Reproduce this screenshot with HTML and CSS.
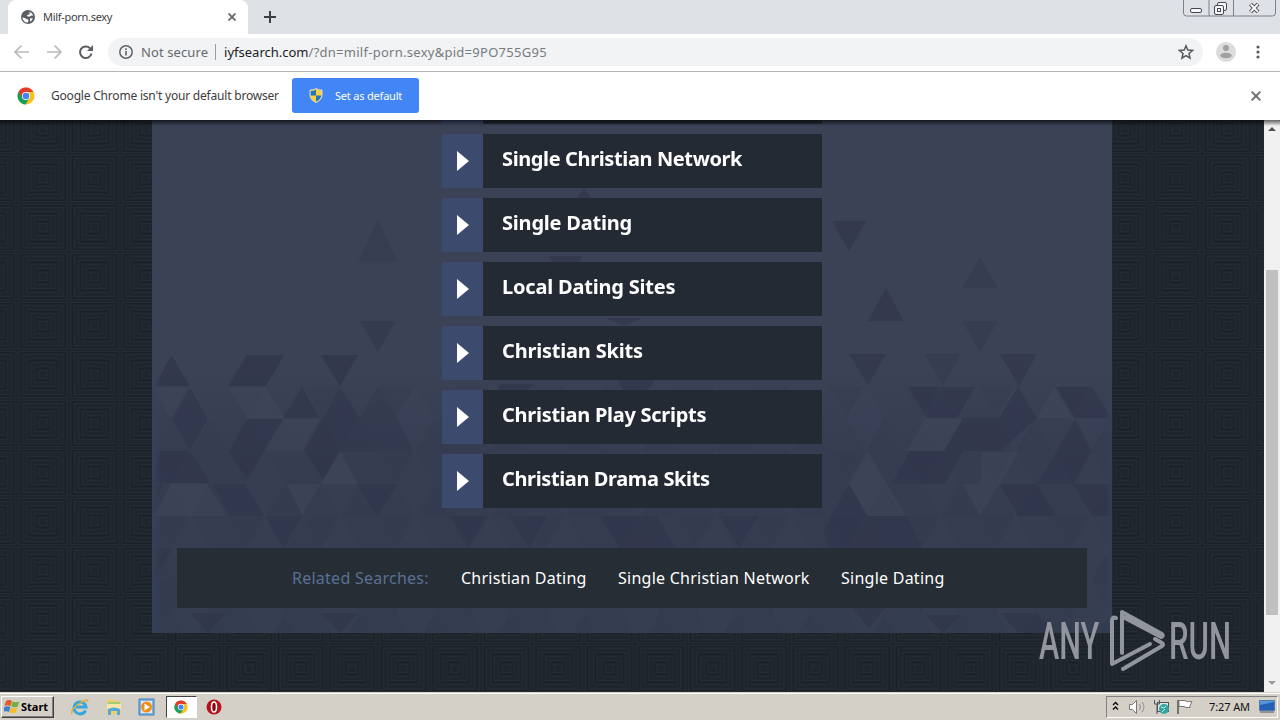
FILE: index.html
```html
<!DOCTYPE html>
<html lang="en">
<head>
<meta charset="utf-8">
<title>Browser</title>
<link rel="stylesheet" href="styles.css">
</head>
<body>
<svg width="0" height="0" class="defs"><defs>
<symbol id="chrome" viewBox="0 0 18 18"><circle cx="9" cy="9" r="8.5" fill="#fbc116"/><path d="M9 9 1.600 4.800A8.500 8.500 0 0 0 8.500 17.500L12.600 11z" fill="#17a05d"/><path d="M1.600 4.800A8.500 8.500 0 0 1 16.400 5H9L5.400 11z" fill="#e33b2e"/><circle cx="9" cy="9" r="4.100" fill="#fff"/><circle cx="9" cy="9" r="3.300" fill="#4285f4"/></symbol>
</defs></svg>
<header class="tabstrip">
  <div class="tab">
    <svg class="globe" width="14" height="14" viewBox="0 0 14 14"><circle cx="7" cy="7" r="7" fill="#5b5f64"/><path d="M1.500 7.500 4 8l1.500 1.200 2 .3-.5 3C4 12.600 1.500 10.500 1.500 7.500zM7.500 1.700 9 3 8 4.500 6 5 6.500 6.500H9l1.500-1 1.800 0C11.500 3.500 10 2 7.500 1.700zM9 8.500l2.800-.5-1 2.500-1.800 1z" fill="#fff"/></svg>
    <span class="tab-title">Milf-porn.sexy</span>
    <svg class="tab-close" width="8" height="8" viewBox="0 0 8 8"><path d="M.5.5l7 7M7.500.5l-7 7" stroke="#5f6368" stroke-width="1.700"/></svg>
  </div>
  <svg class="plus" width="12" height="12" viewBox="0 0 12 12"><path d="M6 0v12M0 6h12" stroke="#3c4043" stroke-width="2"/></svg>
  <svg class="winbtns" width="94" height="18" viewBox="0 0 94 18" fill="none" stroke="#7c818a"><path d="M.5 0v13q0 3 3 3h86q3 0 3-3V0M26 0v16M50.500 0v16"/><g stroke="#45484e"><rect x="7.500" y="8.500" width="11" height="4" rx="1.500" fill="#f7f7f7"/><rect x="34.500" y="2.500" width="9" height="8" rx="1.500" fill="#f7f7f7"/><rect x="31.500" y="5.500" width="9" height="9" rx="1.500" fill="#f7f7f7"/><rect x="34.500" y="8.500" width="3" height="3"/></g><path d="M67.500 4l7.500 8M75 4l-7.500 8" stroke="#45484e" stroke-width="4"/><path d="M67.700 4.200l7.100 7.600M74.800 4.200l-7.100 7.600" stroke="#f7f7f7" stroke-width="2"/></svg>
</header>
<nav class="toolbar">
  <svg class="navicons" width="82" height="18" viewBox="0 0 82 18" fill="none" stroke-width="2"><path d="M16 9H2.500M8.500 2.500 2 9l6.500 6.500M34 9h13.500M41.500 2.500 48 9l-6.500 6.500" stroke="#b8babd" stroke-width="1.700"/><path d="M77 5.200A5.800 5.800 0 1 0 78.500 10.500" stroke="#5a5d61"/><path d="M80 2v6h-6z" fill="#5a5d61"/></svg>
  <div class="omnibox">
    <svg width="14" height="14" viewBox="0 0 14 14"><circle cx="7" cy="7" r="6.200" fill="none" stroke="#5f6368" stroke-width="1.500"/><path d="M7 6v4.500M7 3.300v1.600" stroke="#5f6368" stroke-width="1.600"/></svg>
    <span class="notsecure">Not secure</span><i class="sep"></i><span class="host">iyfsearch.com</span><span class="path">/?dn=milf-porn.sexy&amp;pid=9PO755G95</span>
    <svg class="star" width="16" height="16" viewBox="0 0 16 16"><path d="M8 1.800l1.800 4.300 4.700.4-3.500 3 1 4.600-4-2.400-4 2.400 1-4.600-3.500-3 4.700-.4z" fill="none" stroke="#56595e" stroke-width="1.500"/></svg>
  </div>
  <svg class="avatar" width="20" height="20" viewBox="0 0 20 20"><circle cx="10" cy="10" r="10" fill="#dcdcdc"/><circle cx="10" cy="6" r="3" fill="#a1a1a1"/><ellipse cx="10" cy="13.500" rx="5.700" ry="2.800" fill="#a1a1a1"/></svg>
  <svg class="dots" width="4" height="14" viewBox="0 0 4 14" fill="#5a5d61"><circle cx="2" cy="2" r="1.600"/><circle cx="2" cy="7" r="1.600"/><circle cx="2" cy="12" r="1.600"/></svg>
</nav>
<section class="infobar">
  <svg width="18" height="18"><use href="#chrome"/></svg>
  <span class="info-text">Google Chrome isn't your default browser</span>
  <div class="set-default">
    <svg width="14" height="15" viewBox="0 0 14 15"><path d="M7 .5q3 2 6 1.500v5q0 5-6 7.500-6-2.500-6-7.500V2q3 .5 6-1.500z" fill="#f8d13b" stroke="#d5d7ce"/><path d="M7 1.500v6H1.700V3q3 .2 5.300-1.500zM7 7.500h5.200q-.5 4-5.200 6z" fill="#2473bd"/></svg>
    <span>Set as default</span>
  </div>
  <svg class="info-close" width="10" height="10" viewBox="0 0 10 10"><path d="M.7.7l8.600 8.600M9.300.7.7 9.300" stroke="#6a6a6a" stroke-width="1.900"/></svg>
</section>
<main class="viewport">
  <svg class="texture" width="1264" height="572"><defs><pattern id="weave" x="17.500" y="34" width="51.500" height="49" patternUnits="userSpaceOnUse"><rect width="51.500" height="49" fill="#1f252c"/><g fill="none" stroke="#252b33" stroke-width="1"><rect x="1.500" y="1.500" width="48" height="46"/><rect x="5.500" y="4.500" width="40" height="40"/><rect x="9.500" y="8.500" width="32" height="32"/><rect x="13.500" y="12.500" width="24" height="24"/><rect x="17.500" y="16.500" width="16" height="16"/><rect x="21.500" y="20.500" width="8" height="8"/></g><g fill="none" stroke="#1c2128"><rect x="3.500" y="2.500" width="44" height="44"/><rect x="11.500" y="10.500" width="28" height="28"/><rect x="19.500" y="18.500" width="12" height="12"/></g></pattern></defs><rect width="1264" height="572" fill="url(#weave)"/></svg>
  <div class="panel">
    <svg class="facets" width="960" height="513" viewBox="152 120 960 513">
      <defs><linearGradient id="deep" x1="0" y1="0" x2="0" y2="1"><stop offset="0" stop-color="#353b50" stop-opacity="0"/><stop offset=".35" stop-color="#353b50" stop-opacity=".85"/><stop offset="1" stop-color="#343c50"/></linearGradient>
      <linearGradient id="edge" x1="0" y1="0" x2="1" y2="0"><stop offset="0" stop-color="#344558" stop-opacity=".7"/><stop offset=".01" stop-color="#344558" stop-opacity="0"/><stop offset=".992" stop-color="#344558" stop-opacity="0"/><stop offset="1" stop-color="#344558" stop-opacity=".6"/></linearGradient>
      <pattern id="tri" x="153" y="386" width="75" height="65" patternUnits="userSpaceOnUse"><path d="M0 0h37.500L18.750 32.500zM56.250 32.500 75 65H37.500z" fill="#2e3449" opacity=".15"/><path d="M37.500 0 56.250 32.500H18.750zM18.750 32.500h37.500L37.500 65z" fill="#414860" opacity=".12"/></pattern></defs>
      <path d="M152 368h960v265H152z" fill="url(#deep)"/><path d="M152 386h960v247H152z" fill="url(#tri)"/>
      <g fill="#30364a">
        <path opacity=".3" d="M378 220l20 42h-40z"/><path opacity=".55" d="M360 321h36l-18 31z"/>
        <path opacity=".7" d="M832 221h34l-17 30zM886 288l18 33h-36z"/><path opacity=".4" d="M980 257l18 31h-36zM962 321h36l-18 31zM925 354h36l-18 31z"/><path opacity=".7" d="M849 354h37l-18 31zM1000 354h37l-18 32z"/>
        <path opacity=".75" d="M171.500 355l18 31h-35zM247 355h37l-18 31h-38zM321 355h37l-18 31z"/>
      </g>
      <g fill="#2f354a" opacity=".6">
        <path d="M190 388l18 31-18 31-18-31zM302 387l18 31h-37zM340 387l20 31-37 61-18-29zM247 419h36l-36 60-18-28zM160 451h30l20 32h-57zM212 484h33l19 32h-34zM358 484h39l-20 32zM265 516h37l-19 32z"/>
        <path opacity=".55" d="M378 387l20 31 14 34h-72l20-34z"/>
        <path d="M908 387h67l-18 31h-30zM1056 387h36l19 31h-36zM1018 387l19 31-37 33h-55l18-33h36zM1075 419l-37 65h36l18-33zM999 484h38l19 32h-38zM868 516h38l16 32h-73zM910 451h53l-18 33h-53zM849 484l18 32-18 32h-20l-5-18zM1073 484h39v32h-20z"/>
        <path d="M584 188l10 13h-20zM549 256h34l-17 31zM606 318h36l-18 8zM500 384h35l-10 8h-28zM618 380h37l-9 12h-22zM510 516h37l-18 32zM600 516h56l20 32h-56zM720 516h38l-19 32zM450 516h36l-18 32z"/>
      </g>
      <g fill="#424759" opacity=".5">
        <path d="M153 387h36l-18 31zM228 387h37l19 31h-37zM284 419h36l-18 32h-37zM171 484h36l20 32h-73zM340 452l18 32h-37zM302 484h19l-19 31-15-31z"/>
        <path d="M925 419h38l-19 32h-37zM868 451l19 33 19 32h-38l-19-32zM982 452h36l-18 32h-20zM963 484h37l-20 32zM1055 387l18 31h-37z"/>
      </g>
      <g fill="#303548" opacity=".6"><path d="M162 484h-10v32zM152 548h20l-20 34zM320 613h38l-18 20zM925 615h36l-18 18zM852 608h34l-17 20zM190 613h36l-18 20zM1000 613h37l20 20h-38z"/></g>
      <path d="M152 120h960v513H152z" fill="url(#edge)"/>
    </svg>
    <ul class="links">
      <li><b></b><span></span></li>
      <li><b></b><span class="w1">Single Christian Network</span></li>
      <li><b></b><span class="w2">Single Dating</span></li>
      <li><b></b><span class="w2">Local Dating Sites</span></li>
      <li><b></b><span class="w2">Christian Skits</span></li>
      <li><b></b><span class="w5">Christian Play Scripts</span></li>
      <li><b></b><span class="w1">Christian Drama Skits</span></li>
    </ul>
    <div class="related"><span class="label">Related Searches:</span><span class="r1">Christian Dating</span><span class="r2">Single Christian Network</span><span class="r3">Single Dating</span></div>
  </div>
  <div class="scrollbar"><i class="up"></i><i class="thumb"></i><i class="down"></i></div>
  <div class="watermark">
    <svg width="200" height="70" viewBox="1035 605 200 70"><g fill="none" stroke="#92959d" stroke-width="4" stroke-linejoin="round" stroke-linecap="round"><path d="M1116 618q-4-2-4 3v43l38-20M1122 653v-41l40 22q2 2-1 3l-36-19M1123 669l39-23q2-1 0-3l-7-4"/></g></svg>
    <span class="any">ANY</span><span class="run">RUN</span>
  </div>
</main>
<footer class="taskbar">
  <div class="start"><svg width="16" height="15" viewBox="0 0 16 15"><path d="M2 2q3-2 6 0L6.500 7q-3-1.500-6 0z" fill="#e45b24"/><path d="M8.700 2.500q3 1.500 6.500 0l-1.500 5q-3 1.500-6.500 0z" fill="#73b03b"/><path d="M.4 8q3-1.500 6 0L5 13q-3-1.500-6 0z" fill="#3c7fd0"/><path d="M7 8.500q3 1.500 6.500 0l-1.500 5q-3 1.500-6.500 0z" fill="#f8bd2a"/></svg><span>Start</span></div>
  <div class="launch">
    <svg width="18" height="18" viewBox="0 0 18 18"><path d="M14.500 12.500A6 6 0 1 1 15 9H5" fill="none" stroke="#38a7df" stroke-width="3"/><path d="M1 16Q-1 12 8 6 18-1 16.500 4" fill="none" stroke="#e4ad2d" stroke-width="1.500"/></svg>
    <svg width="18" height="18" viewBox="0 0 18 18"><path d="M2 3V1.500h6L9 3h7v13H2z" fill="#f1cf68"/><path d="M3 4h12v4H3z" fill="#9fcd78"/><path d="M2 6h14v5H2z" fill="#f9e7a7"/><path d="M3 17v-6q6-3 12 0v6h-3v-4H6v4z" fill="#55a9d8"/></svg>
    <svg width="18" height="18" viewBox="0 0 18 18"><path d="M1 1h15v16H1z" fill="#7fb3df" stroke="#3a7fc0"/><path d="M3 3h11v12H3z" fill="#ddecf8"/><circle cx="8.500" cy="9" r="5.500" fill="#f28b18"/><path d="M6.500 5.500 12 9l-5.500 3.500z" fill="#fff"/></svg>
    <div class="active"><svg width="14" height="14"><use href="#chrome"/></svg></div>
    <svg width="16" height="16" viewBox="0 0 16 16"><circle cx="8" cy="8" r="7.500" fill="#b5121b"/><ellipse cx="8" cy="8" rx="2.500" ry="5" fill="#8b0710" stroke="#fff" stroke-width="1.500"/></svg>
  </div>
  <div class="tray">
    <svg class="traysvg" width="90" height="20" viewBox="0 0 90 20" fill="none"><path d="M6 8l2.500-2.500L11 8M6 12.500 8.500 10l2.500 2.500" stroke="#111" stroke-width="1.500"/><path d="M22.500 7.500h3l4-4v13l-4-4h-3z" fill="#fff" stroke="#777"/><path d="M32.500 7q2 3 0 6M35 5q4 5 0 10" stroke="#8d8d8d"/><rect x="50.500" y="5.500" width="11" height="9" fill="#dce5e6" stroke="#555"/><path d="M47.500 3v4h5V3M50 7v10" stroke="#555"/><circle cx="57" cy="12" r="5" fill="#35a5a0"/><path d="M54 10l3 1 2-2M55 15l3-3" stroke="#c0eee3"/><path d="M71 3v14" stroke="#555" stroke-width="1.500"/><path d="M72 3.500h6q2 2 7 1l-2 4v2h-4l-2-1h-5z" fill="#fff" stroke="#777"/></svg>
    <span class="clock">7:27 AM</span>
    <svg width="16" height="14" viewBox="0 0 16 14"><path d="M.5.5h15v10H.5z" fill="#2460b5" stroke="#5779a6"/><path d="M1 5 15 2V1H1z" fill="#5595d9"/><path d="M1 12h14" stroke="#47566b"/></svg>
  </div>
</footer>
</body>
</html>
```
FILE: styles.css
```css
*{box-sizing:border-box}
body{margin:0;width:1280px;height:720px;overflow:hidden;display:flex;flex-direction:column;font-family:"Noto Sans",sans-serif;background:#fff;font-weight:400}
svg{display:block;flex:none}
span{white-space:nowrap}
.defs{position:absolute}
.tabstrip{height:34px;background:#dee1e6;display:flex;padding-left:8px;flex:none}
.tab{width:240px;background:#fff;border-radius:8px 8px 0 0;display:flex;align-items:center;padding:0 12px 0 13px}
.tab-title{font-size:11px;letter-spacing:-.3px;margin-left:8px;color:#3c4043;position:relative;top:-1px}
.tab-close{margin-left:auto}
.plus{margin:11px 0 0 16px}
.winbtns{margin-left:auto;margin-right:3px}
.toolbar{height:38px;border-bottom:1px solid #b6b4b6;display:flex;align-items:center;flex:none;padding:0 0 2px 13px}
.omnibox{height:28px;width:1095px;margin-left:13px;background:#f1f3f4;border-radius:14px;display:flex;align-items:center;padding:0 9px 0 11px;font-size:13px;color:#666a6e}
.notsecure{margin-left:8px;letter-spacing:.1px}
.sep{width:1px;height:16px;background:#999ca0;margin:0 8px 0 7px}
.host{color:#202124}
.path{color:#777b7f;letter-spacing:.27px}
.star{margin-left:auto}
.avatar{margin-left:13px}
.dots{margin-left:20px}
.infobar{height:48px;display:flex;align-items:center;padding:0 19px 1px 17px;flex:none}
.info-text{width:228px;margin-left:16px;font-size:12px;letter-spacing:-.2px;color:#3c3c3c}
.set-default{width:127px;height:35px;margin-left:13px;background:#4285f4;border-radius:3px;display:flex;align-items:center;padding-left:17px;color:#fff;font-size:11px}
.set-default span{margin-left:12px;letter-spacing:-.2px}
.info-close{margin-left:auto}
.viewport{height:572px;position:relative;display:flex;overflow:hidden;background:#1f252c;flex:none}
.viewport::before{content:"";position:absolute;z-index:3;left:0;right:0;top:0;height:6px;background:linear-gradient(rgba(0,0,0,.6),transparent)}
.texture,.facets{position:absolute;left:0;top:0}
.panel{position:relative;width:960px;height:513px;margin-left:152px;background:#3c4255;overflow:hidden}
.links{position:relative;list-style:none;padding:0;margin:-50px 0 0 290px;width:380px;display:flex;flex-direction:column;gap:10px}
.links li{height:54px;display:flex;background:#242a33}
.links b{width:41px;background:#3c4a6e;display:flex;align-items:center;padding-left:15px}
.links b::after{content:"";border-left:12px solid #fff;border-top:10px solid transparent;border-bottom:10px solid transparent}
.links span{padding-left:19px;line-height:50px;font-size:20px;font-weight:700;color:#fff}
.links .w1{letter-spacing:-.38px}
.links .w2{letter-spacing:-.2px}
.links .w5{letter-spacing:-.27px}
.related{position:relative;margin:40px 0 0 25px;width:910px;height:60px;background:#262d34;display:flex;align-items:center;padding-left:115px;color:#fff;font-size:16px;letter-spacing:.25px}
.related span{flex:none}
.related .label{width:169px;color:#5a7094}
.r1{width:157px}
.r2{width:223px}
.scrollbar{position:relative;margin-left:auto;width:16px;background:#f1f1f1;display:flex;flex-direction:column;align-items:center}
.up,.down{border:4px solid transparent}
.up{border-bottom-color:#505050;margin-top:3px}
.down{border-top-color:#9b9b9b;margin-top:66px}
.thumb{width:12px;height:345px;background:#c1c1c1;margin-top:139px}
.watermark{position:absolute;left:1035px;top:485px;width:200px;height:70px;color:#92959d;font-family:Roboto,sans-serif;font-size:51px;font-weight:500;line-height:70px}
.any,.run{position:absolute;top:2px;transform-origin:left center}
.any{left:4px;transform:scaleX(.6)}
.run{left:134px;transform:scaleX(.61)}
.taskbar{height:28px;background:#d4d0c8;border-top:1px solid #d4d0c8;box-shadow:inset 0 1px #fff;display:flex;align-items:center;flex:none}
.start{width:53px;height:22px;margin:1px 0 0 1px;border:1px solid;border-color:#fff #404040 #404040 #fff;box-shadow:inset -1px -1px #808080;display:flex;align-items:center;padding:0 0 2px 2px;color:#000;font-size:11px;font-weight:700}
.start span{margin-left:1px}
.launch{display:flex;align-items:center;margin:0 0 0 17px;gap:15.500px}
.active{width:31px;height:22px;margin:0 -6px;background:#fff;border:1px solid;border-color:#404040 #fff #fff #404040;display:flex;align-items:center;justify-content:center}
.tray{margin:1px 2px 0 auto;width:172px;height:22px;border:1px solid;border-color:#808080 #fff #fff #808080;display:flex;align-items:center}
.clock{font-size:11px;letter-spacing:-.1px;margin:-2px 0 0 12px;width:50px;color:#111}
```
